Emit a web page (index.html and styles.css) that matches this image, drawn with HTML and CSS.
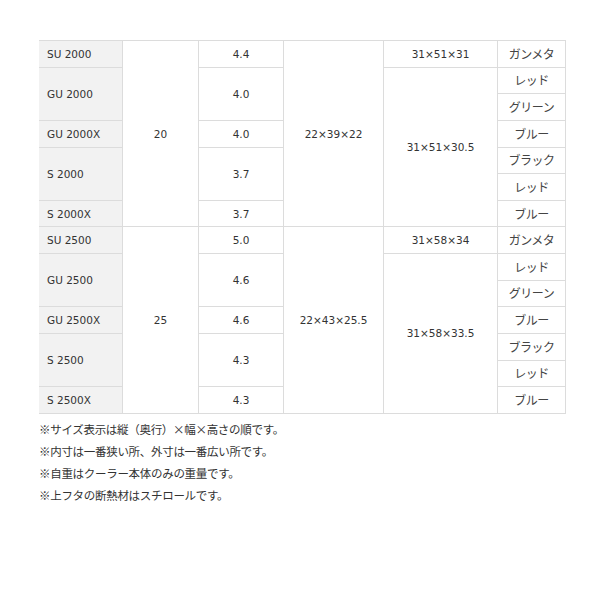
FILE: index.html
```html
<!DOCTYPE html>
<html lang="ja">
<head>
<meta charset="utf-8">
<link rel="stylesheet" href="styles.css">
</head>
<body>
<div class="wrap">
<table class="spec">
<colgroup>
<col class="c1"><col class="c2"><col class="c3"><col class="c4"><col class="c5"><col class="c6">
</colgroup>
<tbody>
<tr><td class="model">SU 2000</td><td rowspan="7">20</td><td>4.4</td><td rowspan="7">22×39×22</td><td>31×51×31</td><td class="jp">ガンメタ</td></tr>
<tr><td class="model" rowspan="2">GU 2000</td><td rowspan="2">4.0</td><td rowspan="6">31×51×30.5</td><td class="jp">レッド</td></tr>
<tr><td class="jp">グリーン</td></tr>
<tr><td class="model">GU 2000X</td><td>4.0</td><td class="jp">ブルー</td></tr>
<tr><td class="model" rowspan="2">S 2000</td><td rowspan="2">3.7</td><td class="jp">ブラック</td></tr>
<tr><td class="jp">レッド</td></tr>
<tr><td class="model">S 2000X</td><td>3.7</td><td class="jp">ブルー</td></tr>
<tr><td class="model">SU 2500</td><td rowspan="7">25</td><td>5.0</td><td rowspan="7">22×43×25.5</td><td>31×58×34</td><td class="jp">ガンメタ</td></tr>
<tr><td class="model" rowspan="2">GU 2500</td><td rowspan="2">4.6</td><td rowspan="6">31×58×33.5</td><td class="jp">レッド</td></tr>
<tr><td class="jp">グリーン</td></tr>
<tr><td class="model">GU 2500X</td><td>4.6</td><td class="jp">ブルー</td></tr>
<tr><td class="model" rowspan="2">S 2500</td><td rowspan="2">4.3</td><td class="jp">ブラック</td></tr>
<tr><td class="jp">レッド</td></tr>
<tr><td class="model">S 2500X</td><td>4.3</td><td class="jp">ブルー</td></tr>
</tbody>
</table>
<ul class="notes">
<li>※サイズ表示は縦（奥行）×幅×高さの順です。</li>
<li>※内寸は一番狭い所、外寸は一番広い所です。</li>
<li>※自重はクーラー本体のみの重量です。</li>
<li>※上フタの断熱材はスチロールです。</li>
</ul>
</div>
</body>
</html>
```

FILE: styles.css
```css
html, body {
  margin: 0;
  padding: 0;
  background: #fff;
}
body {
  font-family: "DejaVu Sans", "Noto Sans CJK JP", sans-serif;
  color: #333;
}
.wrap {
  padding: 40px 0 0 39px;
  width: 526px;
}
.spec {
  border-collapse: collapse;
  table-layout: fixed;
  width: 526px;
  font-size: 10.5px;
}
.c1 { width: 83px; }
.c2 { width: 76px; }
.c3 { width: 85px; }
.c4 { width: 100px; }
.c5 { width: 114px; }
.c6 { width: 68px; }
.spec td {
  border: 1px solid #dcdcdc;
  height: 25.64px;
  padding: 0;
  text-align: center;
  vertical-align: middle;
  line-height: 14px;
  white-space: nowrap;
}
.spec td.model {
  text-align: left;
  padding-left: 7px;
  background: #f2f2f2;
  border-left-color: #f2f2f2;
}
.spec td.jp {
  font-family: "Noto Sans CJK JP", sans-serif;
  font-size: 12px;
  color: #444;
  letter-spacing: -0.5px;
}
.notes {
  list-style: none;
  margin: 4px 0 0 0;
  padding: 0;
  font-family: "Noto Sans CJK JP", sans-serif;
  font-size: 11.5px;
  line-height: 22px;
  letter-spacing: -0.3px;
  color: #333;
}
```
